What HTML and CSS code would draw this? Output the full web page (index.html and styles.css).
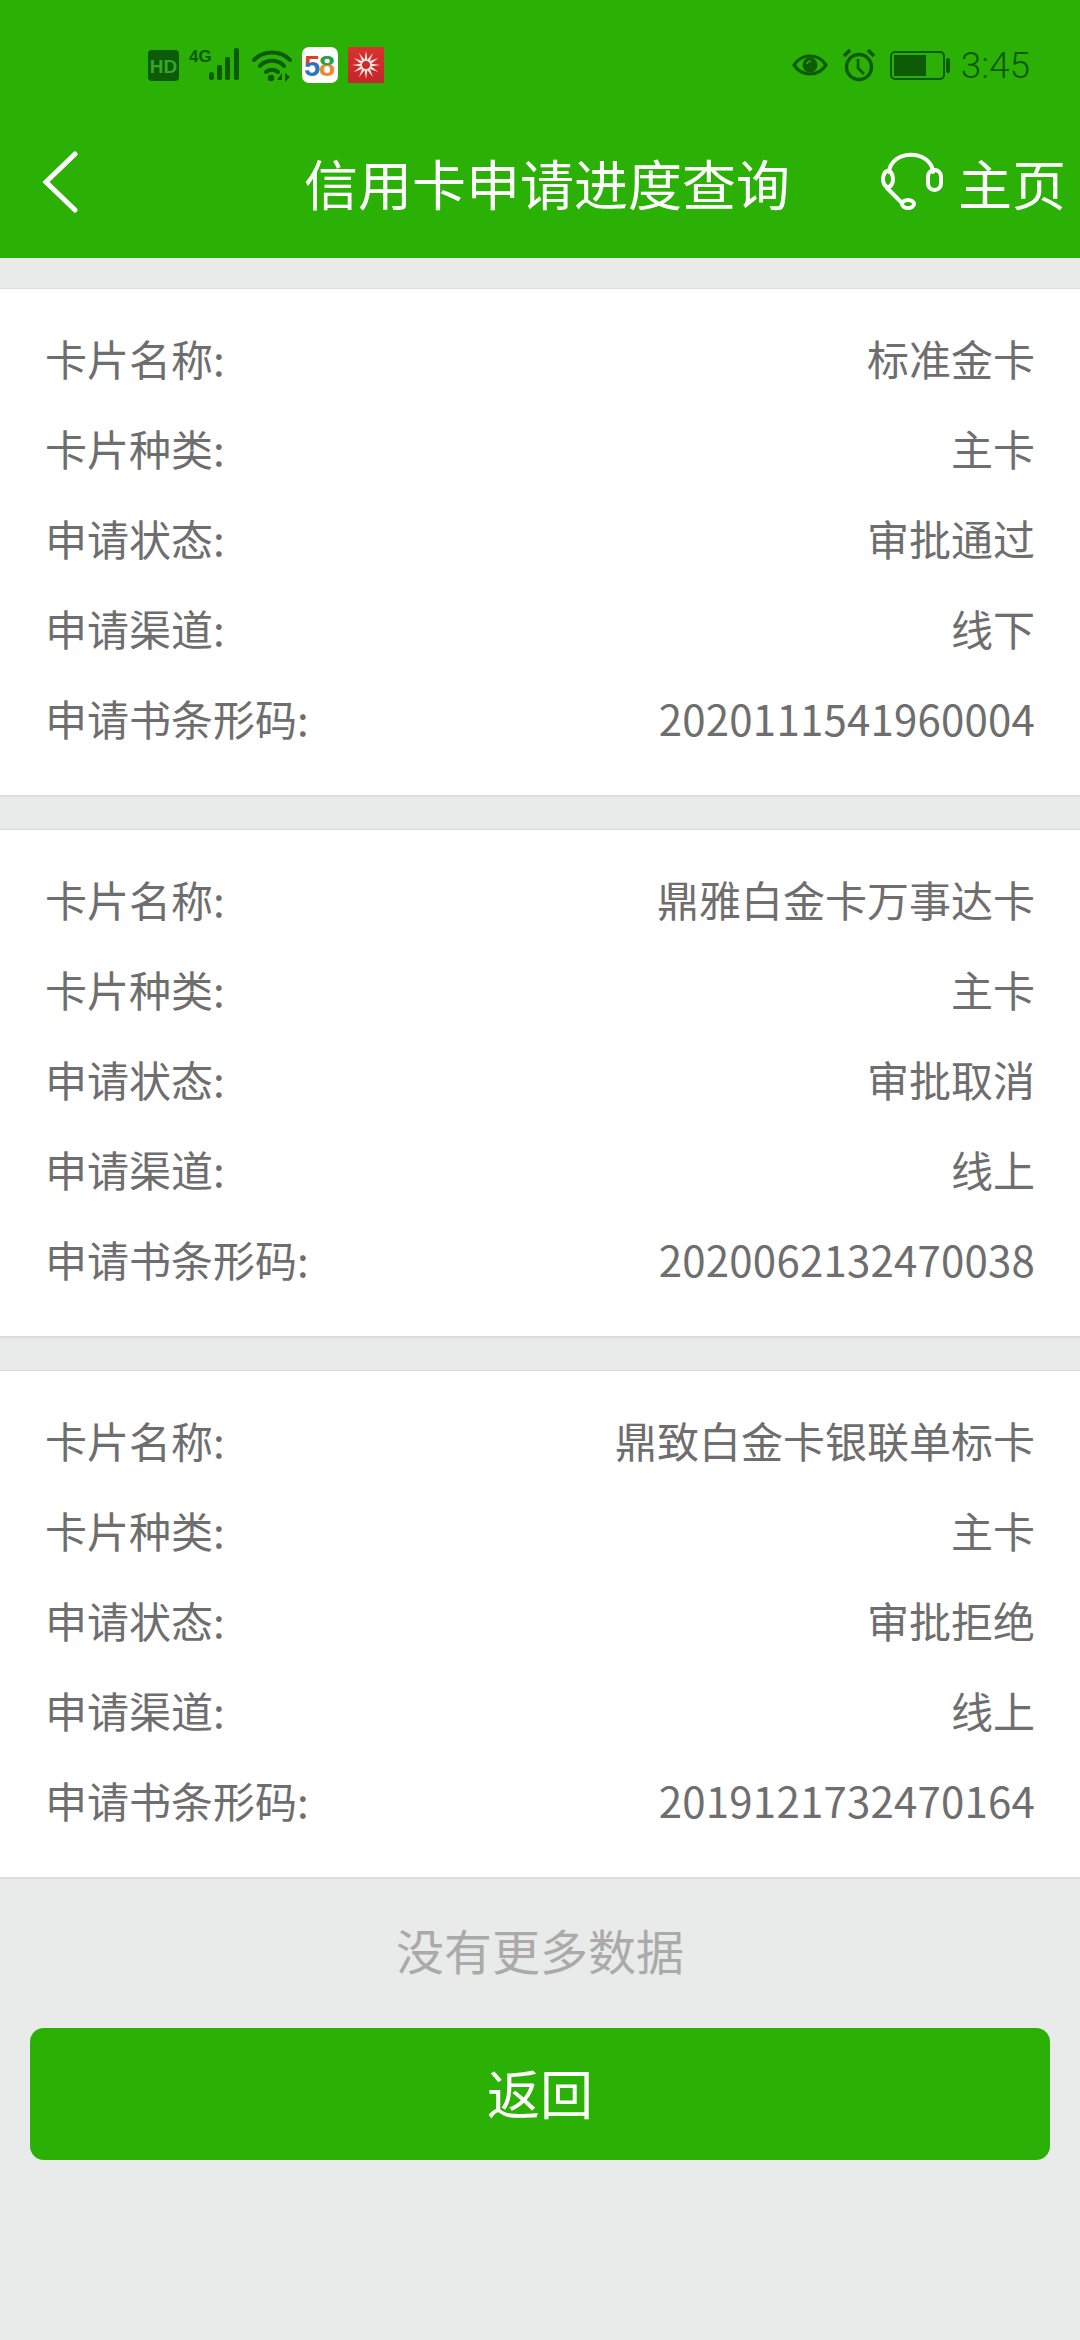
FILE: index.html
```html
<!DOCTYPE html>
<html lang="zh-CN">
<head>
    <meta charset="UTF-8">
    <meta name="viewport" content="width=device-width, initial-scale=1.0">
    <title>信用卡申请进度查询</title>
    <link rel="stylesheet" href="styles.css">
</head>
<body>

    <!-- 顶部绿色区域 -->
    <header class="header">
        <div class="status-bar">
            <div class="status-group">
                <svg class="ic-hd" width="31" height="31" viewBox="0 0 31 31">
                    <rect width="31" height="31" rx="4" fill="#0d5a07"/>
                    <text x="15.5" y="22.5" text-anchor="middle" class="hd-text">HD</text>
                </svg>
                <svg class="ic-signal" width="53" height="33" viewBox="0 0 53 33">
                    <text x="0" y="14" class="net-text">4G</text>
                    <g fill="#0d5a07">
                        <rect x="20" y="24" width="5" height="8" rx="2.5"/>
                        <rect x="28" y="17" width="5" height="15" rx="2"/>
                        <rect x="36" y="9" width="5" height="23" rx="2"/>
                        <rect x="45" y="0" width="5" height="32" rx="2"/>
                    </g>
                </svg>
                <svg class="ic-wifi" width="40" height="33" viewBox="0 0 40 33">
                    <g fill="none" stroke="#0d5a07" stroke-width="4" stroke-linecap="round">
                        <path d="M2 11C11 1 29 1 38 11"/>
                        <path d="M8 17C14 10 26 10 32 17"/>
                        <path d="M14 23C17 20 23 20 26 23"/>
                    </g>
                    <circle cx="19" cy="29" r="3.2" fill="#0d5a07"/>
                    <path d="M25 31L30 24V31ZM33 24V33L38 28Z" fill="#0d5a07"/>
                </svg>
                <svg class="ic-app" width="36" height="36" viewBox="0 0 36 36">
                    <defs>
                        <linearGradient id="five" x1="0" y1="0" x2="0" y2="1">
                            <stop offset="0.42" stop-color="#d8402c"/>
                            <stop offset="0.42" stop-color="#2a75c0"/>
                        </linearGradient>
                        <linearGradient id="eight" x1="0" y1="0" x2="0" y2="1">
                            <stop offset="0.46" stop-color="#2f9e4a"/>
                            <stop offset="0.46" stop-color="#ee8a2a"/>
                        </linearGradient>
                    </defs>
                    <rect width="36" height="36" rx="7" fill="#fff"/>
                    <text x="2" y="29" class="app-text" fill="url(#five)">5</text>
                    <text x="17" y="29" class="app-text" fill="url(#eight)">8</text>
                </svg>
                <svg class="ic-app" width="36" height="36" viewBox="-18 -18 36 36">
                    <defs>
                        <linearGradient id="red" x1="0" y1="0" x2="0" y2="1">
                            <stop offset="0" stop-color="#d9312f"/>
                            <stop offset="1" stop-color="#c4262a"/>
                        </linearGradient>
                    </defs>
                    <rect x="-18" y="-18" width="36" height="36" fill="url(#red)"/>
                    <g fill="#fbe6e2">
                        <path d="M-1.6 -4L0 -14L1.6 -4Z"/>
                        <path d="M-1.6 -4L0 -14L1.6 -4Z" transform="rotate(30)"/>
                        <path d="M-1.6 -4L0 -14L1.6 -4Z" transform="rotate(60)"/>
                        <path d="M-1.6 -4L0 -14L1.6 -4Z" transform="rotate(90)"/>
                        <path d="M-1.6 -4L0 -14L1.6 -4Z" transform="rotate(120)"/>
                        <path d="M-1.6 -4L0 -14L1.6 -4Z" transform="rotate(150)"/>
                        <path d="M-1.6 -4L0 -14L1.6 -4Z" transform="rotate(180)"/>
                        <path d="M-1.6 -4L0 -14L1.6 -4Z" transform="rotate(210)"/>
                        <path d="M-1.6 -4L0 -14L1.6 -4Z" transform="rotate(240)"/>
                        <path d="M-1.6 -4L0 -14L1.6 -4Z" transform="rotate(270)"/>
                        <path d="M-1.6 -4L0 -14L1.6 -4Z" transform="rotate(300)"/>
                        <path d="M-1.6 -4L0 -14L1.6 -4Z" transform="rotate(330)"/>
                    </g>
                </svg>
            </div>
            <div class="status-group status-right">
                <svg width="36" height="28" viewBox="0 0 36 28">
                    <path d="M2 14C10 2 26 2 34 14C26 26 10 26 2 14Z" fill="none" stroke="#0d5a07" stroke-width="3.2" stroke-linejoin="round"/>
                    <circle cx="18" cy="14" r="7.5" fill="#0d5a07"/>
                    <path d="M15 13C15.5 11 17 10 19 10" fill="none" stroke="#2bb006" stroke-width="1.6"/>
                </svg>
                <svg width="34" height="34" viewBox="0 0 34 34">
                    <circle cx="17" cy="19" r="12.5" fill="none" stroke="#0d5a07" stroke-width="3.4"/>
                    <path d="M16 11V20L22 26" fill="none" stroke="#0d5a07" stroke-width="2.6"/>
                    <path d="M2 8L8 2M32 8L26 2" fill="none" stroke="#0d5a07" stroke-width="3.6"/>
                </svg>
                <svg class="ic-battery" width="61" height="29" viewBox="0 0 61 29">
                    <rect x="1" y="1" width="53" height="27" rx="4" fill="none" stroke="#0d5a07" stroke-width="2"/>
                    <rect x="4" y="4" width="32" height="21" fill="#0d5a07"/>
                    <rect x="56" y="7" width="4" height="15" rx="2" fill="#0d5a07"/>
                </svg>
                <span class="time">3:45</span>
            </div>
        </div>
        <div class="nav-bar">
            <svg class="back" width="36" height="62" viewBox="0 0 36 62">
                <path d="M33 3L4 31L33 59" fill="none" stroke="#fff" stroke-width="5" stroke-linecap="round" stroke-linejoin="miter"/>
            </svg>
            <div class="nav-title">信用卡申请进度查询</div>
            <div class="nav-home">
                <svg width="62" height="60" viewBox="0 0 62 60">
                    <g fill="none" stroke="#fff" stroke-width="4" stroke-linecap="round">
                        <path d="M8 20C10 -3 50 -3 52 20"/>
                        <ellipse cx="7" cy="27" rx="5" ry="8"/>
                        <rect x="47" y="18" width="13" height="20" rx="6.5"/>
                        <path d="M6 36L20 50"/>
                        <ellipse cx="27" cy="52" rx="6" ry="4"/>
                    </g>
                </svg>
                <span>主页</span>
            </div>
        </div>
    </header>

    <!-- 申请记录列表 -->
    <main class="list">
        <section class="card">
            <div class="row"><span>卡片名称:</span><span>标准金卡</span></div>
            <div class="row"><span>卡片种类:</span><span>主卡</span></div>
            <div class="row"><span>申请状态:</span><span>审批通过</span></div>
            <div class="row"><span>申请渠道:</span><span>线下</span></div>
            <div class="row"><span>申请书条形码:</span><span class="num">2020111541960004</span></div>
        </section>
        <section class="card">
            <div class="row"><span>卡片名称:</span><span>鼎雅白金卡万事达卡</span></div>
            <div class="row"><span>卡片种类:</span><span>主卡</span></div>
            <div class="row"><span>申请状态:</span><span>审批取消</span></div>
            <div class="row"><span>申请渠道:</span><span>线上</span></div>
            <div class="row"><span>申请书条形码:</span><span class="num">2020062132470038</span></div>
        </section>
        <section class="card">
            <div class="row"><span>卡片名称:</span><span>鼎致白金卡银联单标卡</span></div>
            <div class="row"><span>卡片种类:</span><span>主卡</span></div>
            <div class="row"><span>申请状态:</span><span>审批拒绝</span></div>
            <div class="row"><span>申请渠道:</span><span>线上</span></div>
            <div class="row"><span>申请书条形码:</span><span class="num">2019121732470164</span></div>
        </section>
    </main>

    <p class="no-more">没有更多数据</p>
    <button class="btn-back">返回</button>

</body>
</html>
```

FILE: styles.css
```css
* {
    box-sizing: border-box;
}

body {
    margin: 0;
    height: 2340px;
    overflow: hidden;
    background-color: #e9eaea;
    font-family: "Noto Sans CJK SC", "Noto Sans", sans-serif;
}

/* 顶部 */
.header {
    height: 258px;
    background-color: #2bb006;
}

.status-bar {
    height: 100px;
    padding: 30px 50px 0 148px;
    display: flex;
    justify-content: space-between;
    align-items: center;
}

.status-group {
    display: flex;
    align-items: center;
    gap: 10px;
}

.status-right {
    gap: 14px;
}

.ic-signal {
    margin-top: -2px;
}

.ic-battery {
    margin-right: -4px;
}

.hd-text {
    font: bold 19px "Liberation Sans", sans-serif;
    fill: #35a726;
}

.net-text {
    font: bold 17px "Liberation Sans", sans-serif;
    fill: #0d5a07;
}

.app-text {
    font: bold 29px "Liberation Sans", sans-serif;
}

.time {
    font-family: Roboto, sans-serif;
    font-weight: 300;
    font-size: 37px;
    color: #0d5a07;
}

.nav-bar {
    height: 158px;
    padding: 6px 14px 0 42px;
    display: flex;
    align-items: center;
    color: #fff;
}

.back {
    flex: none;
}

.nav-title {
    margin-left: 226px;
    font-size: 54px;
    white-space: nowrap;
}

.nav-home {
    margin-left: auto;
    display: flex;
    align-items: center;
    gap: 15px;
    font-size: 54px;
}

/* 列表 */
.list {
    padding-top: 30px;
    display: flex;
    flex-direction: column;
    gap: 32px;
}

.card {
    height: 509px;
    padding: 23px 45px 0 45px;
    background-color: #fff;
    border-top: 1px solid #dcdcdc;
    border-bottom: 2px solid #dcdcdc;
}

.row {
    height: 90px;
    display: flex;
    justify-content: space-between;
    align-items: center;
    font-size: 42px;
    color: #6e6e6e;
}

.num {
    letter-spacing: 0.2px;
}

/* 底部 */
.no-more {
    margin: 40px 0 0;
    text-align: center;
    font-size: 48px;
    line-height: 60px;
    color: #aaa;
}

.btn-back {
    display: block;
    width: 1020px;
    height: 132px;
    margin: 49px 30px 0;
    padding-bottom: 6px;
    border: none;
    border-radius: 14px;
    background-color: #2bb006;
    color: #fff;
    font-family: inherit;
    font-size: 53px;
}
```
